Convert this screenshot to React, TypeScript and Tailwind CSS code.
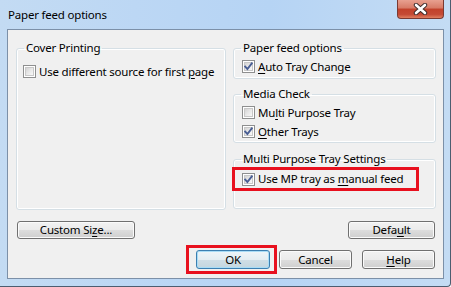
import React from "react";

function Check({ checked }: { checked: boolean }) {
  return (
    <span className="w-[13px] h-[13px] shrink-0 border border-[#8e8f8f] bg-white p-px flex">
      <span className="flex-1 bg-[linear-gradient(135deg,#d4d4d4_0%,#e8e8e8_50%,#f8f8f8_100%)] border border-[#c8c8c8] flex items-center justify-center">
        {checked && (
          <svg width="11" height="11" viewBox="0 0 11 11" className="-m-[2px]">
            <path d="M2.2 5.6 L4.4 8 L8.8 2.4" fill="none" stroke="#4a5f94" strokeWidth="1.9" strokeLinecap="square" />
          </svg>
        )}
      </span>
    </span>
  );
}

function Row({ checked, children, className = "" }: { checked: boolean; children: React.ReactNode; className?: string }) {
  return (
    <div className={"h-[19px] flex items-center gap-[3px] " + className}>
      <Check checked={checked} />
      <span className="leading-[16px] whitespace-nowrap">{children}</span>
    </div>
  );
}

function Btn({ children, className = "", primary = false }: { children: React.ReactNode; className?: string; primary?: boolean }) {
  return (
    <div
      className={
        "flex items-center justify-center rounded-[3px] border leading-[16px] " +
        (primary
          ? "border-[#3c7fb1] shadow-[inset_0_0_0_1px_#a9dcf6] bg-[linear-gradient(#eef5f9_0%,#e4edf2_50%,#d0dee6_51%,#c4d6df_100%)] "
          : "border-[#707070] shadow-[inset_0_0_0_1px_#fbfbfb] bg-[linear-gradient(#f2f2f2_0%,#ebebeb_50%,#dddddd_51%,#cfcfcf_100%)] ") +
        className
      }
    >
      {children}
    </div>
  );
}

function Group({ title, className = "", children }: { title: string; className?: string; children?: React.ReactNode }) {
  return (
    <fieldset className={"border border-[#d5dfe5] rounded-[3px] shadow-[inset_0_0_0_1px_#ffffff] " + className}>
      <legend className="ml-[7px] px-[2px] leading-[16px]">{title}</legend>
      {children}
    </fieldset>
  );
}

export default function App() {
  return (
    <div className="w-[451px] h-[287px] flex flex-col border-r border-b border-[#4c5d70] rounded-br-[4px] bg-[linear-gradient(90deg,#c3dbf3_0%,#bcd7f4_30%,#b6d4f4_60%,#c4dcf4_100%)] text-[11.5px] tracking-[-0.2px] text-black font-['Noto_Sans',sans-serif] overflow-hidden">
      <div className="h-[29px] flex justify-between items-start shrink-0">
        <div className="pl-[8px] pt-[7px] leading-[16px]">Paper feed options</div>
        <div className="mr-[6px] w-[47px] h-[19px] rounded-b-[4px] border border-t-0 border-[#7a3a32] bg-[linear-gradient(#e8a090_0%,#d77a66_45%,#c2412b_50%,#c44a35_80%,#e07e60_100%)] flex items-center justify-center">
          <svg width="17" height="12" viewBox="0 0 17 12">
            <path d="M4 2 L13 10 M13 2 L4 10" stroke="#3b2a2a" strokeWidth="4.4" strokeLinecap="round" />
            <path d="M4 2 L13 10 M13 2 L4 10" stroke="#ffffff" strokeWidth="2.6" strokeLinecap="round" />
          </svg>
        </div>
      </div>
      <div className="ml-[7px] mr-[6px] h-[250px] border border-[#7c90a8] bg-[#f0f0f0] flex flex-col shrink-0">
        <div className="flex gap-[7px] pl-[8px] pr-[7px] pt-[10px]">
          <Group title="Cover Printing" className="w-[210px] h-[170px]">
            <Row checked={false} className="mt-[6px] pl-[6px]">
              Use different source for first <u className="underline-offset-2">p</u>age
            </Row>
          </Group>
          <div className="w-[203px] flex flex-col">
            <Group title="Paper feed options" className="h-[39px]">
              <Row checked={true} className="mt-px pl-[8px]">
                <u className="underline-offset-2">A</u>uto Tray Change
              </Row>
            </Group>
            <Group title="Media Check" className="h-[57px] mt-[7px]">
              <Row checked={false} className="mt-px pl-[8px]">
                Mu<u className="underline-offset-2">l</u>ti Purpose Tray
              </Row>
              <Row checked={true} className="pl-[8px]">
                <u className="underline-offset-2">O</u>ther Trays
              </Row>
            </Group>
            <Group title="Multi Purpose Tray Settings" className="h-[58px] mt-[8px]">
              <div className="-ml-[2px] w-[187px] h-[24px] border-[3px] border-[#e8101e] pl-[7px] flex items-center gap-[3px]">
                <Check checked={true} />
                <span className="leading-[16px] whitespace-nowrap">
                  Use MP tray as <u className="underline-offset-2">m</u>anual feed
                </span>
              </div>
            </Group>
          </div>
        </div>
        <div className="flex justify-between pl-[9px] pr-[8px] mt-[11px]">
          <Btn className="w-[118px] h-[18px]">
            Custom Si<u className="underline-offset-2">z</u>e...
          </Btn>
          <Btn className="w-[87px] h-[18px]">
            Defa<u className="underline-offset-2">u</u>lt
          </Btn>
        </div>
        <div className="flex justify-end items-start pr-[8px] mt-[6px]">
          <div className="w-[91px] h-[29px] border-[3px] border-[#e8101e] pl-[7px] pt-[2px]">
            <Btn primary className="w-[74px] h-[19px]">OK</Btn>
          </div>
          <Btn className="w-[73px] h-[19px] ml-[2px] mt-[5px]">Cancel</Btn>
          <Btn className="w-[73px] h-[19px] ml-[10px] mt-[5px]">
            <u className="underline-offset-2">H</u>elp
          </Btn>
        </div>
      </div>
    </div>
  );
}
